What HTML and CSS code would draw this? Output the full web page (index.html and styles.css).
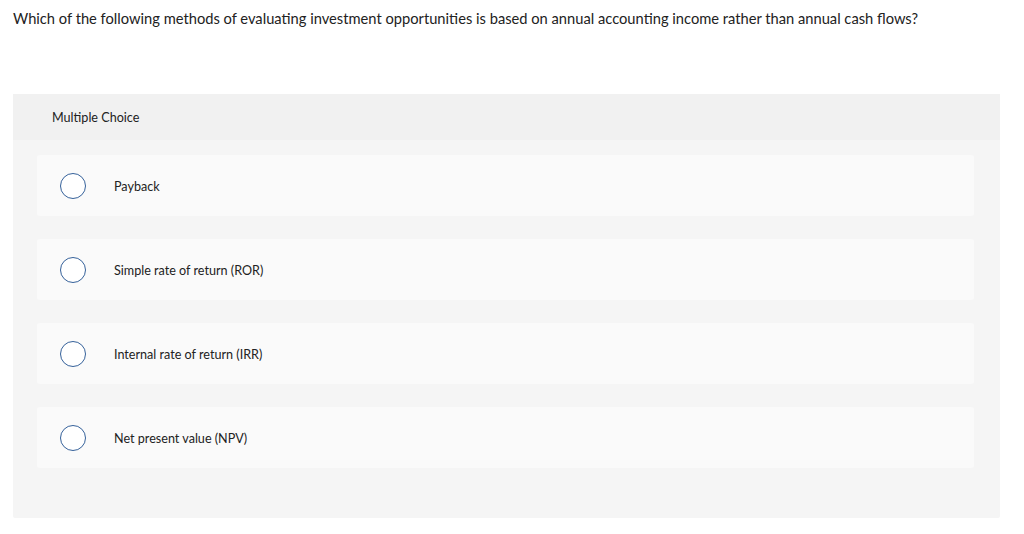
FILE: index.html
```html
<!DOCTYPE html>
<html>
<head>
<meta charset="utf-8">
<link rel="stylesheet" href="styles.css">
</head>
<body>
<p class="question">Which of the following methods of evaluating investment opportunities is based on annual accounting income rather than annual cash flows?</p>
<div class="panel">
  <div class="panel-head">Multiple Choice</div>
  <div class="choices">
    <div class="choice"><span class="radio"></span><span class="label">Payback</span></div>
    <div class="choice"><span class="radio"></span><span class="label">Simple rate of return (ROR)</span></div>
    <div class="choice"><span class="radio"></span><span class="label">Internal rate of return (IRR)</span></div>
    <div class="choice"><span class="radio"></span><span class="label">Net present value (NPV)</span></div>
  </div>
</div>
</body>
</html>
```
FILE: styles.css
```css
html, body { margin: 0; padding: 0; background: #fff; }
body {
  font-family: "Lato", "Liberation Sans", sans-serif;
  color: #222;
  padding: 0 24px 0 13px;
}
.question {
  margin: 0;
  padding-top: 9px;
  font-size: 14.7px;
  line-height: 18px;
}
.panel {
  margin-top: 67px;
  width: 987px;
  height: 424px;
  background: #f5f5f5;
  border-radius: 2px;
}
.panel-head {
  height: 46px;
  background: #f1f1f1;
  font-size: 12.6px;
  line-height: 48px;
  padding-left: 39px;
}
.choices {
  display: flex;
  flex-direction: column;
  gap: 23px;
  padding: 15px 26px 0 24px;
}
.choice {
  height: 61px;
  background: #fafafa;
  border-radius: 3px;
  display: flex;
  align-items: center;
  padding-left: 23px;
}
.radio {
  width: 24px;
  height: 24px;
  border: 1.2px solid #35619a;
  border-radius: 50%;
  background: #fff;
  flex: none;
}
.label {
  margin-left: 28px;
  padding-top: 2px;
  font-size: 12.6px;
}
```
